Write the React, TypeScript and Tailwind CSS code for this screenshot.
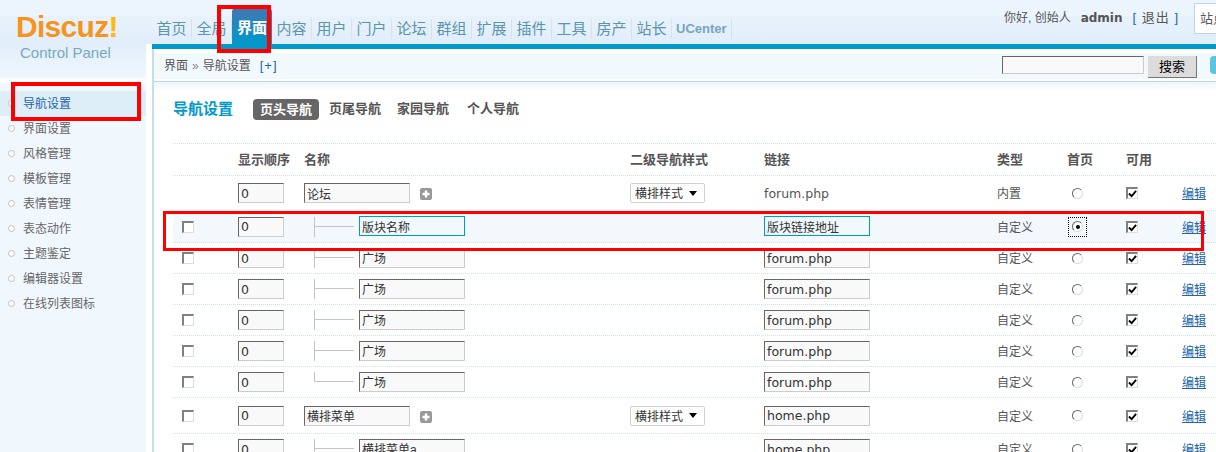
import React from 'react'

const cjk = '[font-family:"Liberation_Sans","Noto_Sans_CJK_SC",sans-serif]'
const grid = 'grid grid-cols-[65px_66px_326px_134px_233px_70px_59px_55px_1fr] items-center'

const navItems = ['首页', '全局', '界面', '内容', '用户', '门户', '论坛', '群组', '扩展', '插件', '工具', '房产', '站长']
const sideItems = ['导航设置', '界面设置', '风格管理', '模板管理', '表情管理', '表态动作', '主题鉴定', '编辑器设置', '在线列表图标']
const tabs = ['页头导航', '页尾导航', '家园导航', '个人导航']

const TextBox: React.FC<{ value: string; width: string; focus?: boolean; latin?: boolean }> = ({ value, width, focus, latin }) => (
  <input
    readOnly
    value={value}
    className={`${width} h-[20px] px-[2px] text-[#333] outline-none ${
      latin ? "text-[12.5px] [font-family:'DejaVu_Sans',sans-serif]" : `text-[12px] ${cjk}`
    } ${
      focus
        ? 'border border-[#0099cc] bg-[#f2f9fd]'
        : 'border border-t-[#666] border-l-[#666] border-b-[#ccc] border-r-[#ccc] bg-[#f9f9f9]'
    }`}
  />
)

const CheckBox: React.FC<{ checked?: boolean }> = ({ checked }) => (
  <div className="w-[12px] h-[12px] border border-t-2 border-l-2 border-t-[#808080] border-l-[#808080] border-b-[#ddd] border-r-[#ddd] bg-white flex items-center justify-center">
    {checked && (
      <svg viewBox="0 0 10 10" className="w-[9px] h-[9px] shrink-0">
        <path d="M1 5 L4 8 L9 2" fill="none" stroke="#000" strokeWidth="2" />
      </svg>
    )}
  </div>
)

const Radio: React.FC<{ checked?: boolean }> = ({ checked }) => (
  <div className={`w-[19px] h-[20px] flex items-center justify-center ${checked ? 'outline-1 outline-dotted outline-black -outline-offset-1' : ''}`}>
    <div className="w-[11px] h-[11px] rounded-full border border-t-[#666] border-l-[#666] border-b-[#ddd] border-r-[#ddd] bg-white flex items-center justify-center">
      {checked && <div className="w-[4px] h-[4px] rounded-full bg-black" />}
    </div>
  </div>
)

const Tree: React.FC<{ last?: boolean }> = ({ last }) =>
  last ? (
    <div className="w-[40px] h-[10px] mb-[10px] ml-[10px] border-l border-b border-[#c4c4c4]" />
  ) : (
    <div className="w-[40px] h-[20px] ml-[10px] border-l border-[#c4c4c4]">
      <div className="h-[10px] border-b border-[#c4c4c4]" />
    </div>
  )

const Plus = () => (
  <div className="w-[12px] h-[12px] ml-[10px] mt-[2px] rounded-[2px] bg-[#999] flex items-center justify-center">
    <svg viewBox="0 0 12 12" className="w-[12px] h-[12px]">
      <path d="M6 2.5 V9.5 M2.5 6 H9.5" stroke="#fff" strokeWidth="2.4" />
    </svg>
  </div>
)

const StyleSelect = () => (
  <div className="w-[75px] h-[20px] pl-[4px] pr-[7px] rounded-[2px] border border-[#ccd0d8] bg-white flex items-center justify-between text-[12px] text-[#333]">
    <span className="pt-[2px]">横排样式</span>
    <svg viewBox="0 0 8 5" className="w-[8px] h-[5px]">
      <path d="M0 0 H8 L4 5 Z" fill="#000" />
    </svg>
  </div>
)

interface RowProps {
  height: string
  check?: boolean
  name: string
  child?: boolean
  last?: boolean
  select?: boolean
  link: string
  linkInput?: boolean
  type: string
  active?: boolean
}

const Row: React.FC<RowProps> = ({ height, check = true, name, child, last, select, link, linkInput, type, active }) => (
  <div className={`${grid} ${height} ${active ? 'bg-[#f2f8fc]' : ''} border-b border-dotted border-[#cfe3ef] text-[12px] text-[#555]`}>
    <div className="pl-[9px]">{check && <CheckBox />}</div>
    <div><TextBox value="0" width="w-[46px]" latin /></div>
    <div className="flex items-center">
      {child ? (
        <>
          <Tree last={last} />
          <div className="ml-[5px]"><TextBox value={name} width="w-[106px]" focus={active} /></div>
        </>
      ) : (
        <>
          <TextBox value={name} width="w-[106px]" />
          <Plus />
        </>
      )}
    </div>
    <div>{select && <StyleSelect />}</div>
    <div>
      {linkInput ? (
        <TextBox value={link} width="w-[106px]" focus={active} latin={!active} />
      ) : (
        <span className="relative top-[1px] text-[12.5px] text-[#555] [font-family:'DejaVu_Sans',sans-serif]">{link}</span>
      )}
    </div>
    <div className="pt-[2px]">{type}</div>
    <div className="pl-[1px]"><Radio checked={active} /></div>
    <div><CheckBox checked /></div>
    <div className="pl-[1px] pt-[2px]"><a className="text-[#2366a8] underline">编辑</a></div>
  </div>
)

const App: React.FC = () => {
  return (
    <div className={`relative w-[1216px] h-[452px] overflow-hidden bg-white ${cjk}`}>
      <header className="flex h-[44px] bg-[linear-gradient(#ecf5fd_0,#ecf5fd_16px,#e8f2fb_16px,#e0eefa_100%)]">
        <div className="w-[152px] h-[44px] pl-[16px] pt-[5px] text-[30px] leading-[44px] font-bold tracking-[-0.7px] text-[#f7941d] [font-family:'Liberation_Sans',sans-serif]">
          Discuz<span className="text-[#fdb813]">!</span>
        </div>
        <nav className="flex h-[44px] items-end">
          {navItems.map((item) =>
            item === '界面' ? (
              <div
                key={item}
                className="w-[40px] h-[36px] pt-[4px] rounded-t-[4px] bg-[linear-gradient(#3f78b4,#0099cc)] text-white text-[15px] font-bold text-center leading-[32px]"
              >
                {item}
              </div>
            ) : (
              <div key={item} className="w-[40px] h-[28px] text-center text-[15px] text-[#5c94ac]">
                <div className="h-[20px] mt-[3px] border-r border-[#d3e3ee] leading-[20px]">{item}</div>
              </div>
            ),
          )}
          <div className="h-[28px] pl-[4px]">
            <div className="h-[20px] mt-[3px] pr-[4px] border-r border-[#d3e3ee] text-[13px] font-bold leading-[20px] text-[#74a6c0]">
              UCenter
            </div>
          </div>
        </nav>
        <div className="ml-auto flex items-start text-[12px] text-[#555]">
          <div className="pt-[9px] flex gap-[10px] mr-[15px] leading-[18px]">
            <span>你好, 创始人</span>
            <span className="font-bold [font-family:'DejaVu_Sans',sans-serif]">admin</span>
            <span className="text-[13px] tracking-[1px]"><span className="text-[#2366a8]">[</span> 退出 <span className="text-[#2366a8]">]</span></span>
          </div>
          <div className="mt-[3px] w-[40px] mr-[-18px] h-[31px] border border-[#bcd8e2] bg-white pl-[5px] text-[13px] leading-[29px] overflow-hidden whitespace-nowrap">
            站点功能
          </div>
        </div>
      </header>

      <div className="flex h-[408px]">
        <aside className="w-[146px] flex flex-col">
          <div className="h-[34px] shrink-0 pl-[20px] text-[15px] leading-[17px] text-[#7aa8bc] bg-[linear-gradient(#e0eefa,#f0f7fd)] [font-family:'Liberation_Sans',sans-serif]">
            Control Panel
          </div>
          <div className="h-[5px] shrink-0 bg-white" />
          <div className="flex-1 bg-[#f1f8fd] pt-[8px]">
            {sideItems.map((item, i) => (
              <div key={item} className={`h-[25px] flex items-center ${i === 0 ? 'bg-[#deeef8] text-[#2366a8]' : 'text-[#666]'} text-[12px]`}>
                <div className="ml-[8px] w-[7px] h-[7px] rounded-full border border-[#c0c0c0] bg-white" />
                <span className="ml-[8px]">{item}</span>
              </div>
            ))}
          </div>
        </aside>

        <main className="ml-[6px] flex-1 flex flex-col min-w-0 overflow-hidden">
          <div className="h-[5px] shrink-0 bg-[#0099cc]" />
          <div className="flex-1 flex flex-col border-l-2 border-[#c4deec] min-w-0">
            <div className="h-[4px] shrink-0" />
            <div className="h-[26px] shrink-0 bg-[#f2f9fd] flex items-center pl-[10px] text-[12px] text-[#555]">
              <span>界面</span>
              <span className="mx-[4px] text-[#888]">»</span>
              <span>导航设置</span>
              <span className="ml-[9px] text-[13px] tracking-[1px] text-[#2366a8]">[+]</span>
              <div className="ml-auto flex items-start mt-[2px]">
                <div className="w-[142px] h-[18px] border border-t-[#666] border-l-[#666] border-b-[#ccc] border-r-[#ccc] bg-[#f9f9f9]" />
                <button className="ml-[4px] w-[49px] h-[22px] bg-[#dcdcdc] border-r border-b border-[#777] text-[13px] text-black">搜索</button>
                <div className="ml-[13px] w-[6px] h-[18px] rounded-l-[4px] bg-[#5cc6dc]" />
              </div>
            </div>
            <div className="h-[2px] shrink-0" />
            <div className="h-[1px] shrink-0 bg-[#b9d7e3]" />
            <div className="h-[10px] shrink-0 bg-[linear-gradient(#eef6fb,#fff)]" />
            <div className="pl-[19px] pt-[5px]">
              <div className="flex items-center h-[24px]">
                <h1 className="text-[15px] font-bold text-[#0099cc] w-[80px]">导航设置</h1>
                <div className="flex items-center text-[13px] font-bold text-[#555]">
                  <span className="w-[66px] h-[21px] rounded-[4px] bg-[#666] text-white text-center leading-[21px]">{tabs[0]}</span>
                  <span className="ml-[10px]">{tabs[1]}</span>
                  <span className="ml-[16px]">{tabs[2]}</span>
                  <span className="ml-[18px]">{tabs[3]}</span>
                </div>
              </div>
              <div className="mt-[22px] border-t border-dotted border-[#cfe3ef]">
                <div className={`${grid} h-[32px] border-b border-dotted border-[#cfe3ef] text-[13px] font-bold text-[#555]`}>
                  <div />
                  <div>显示顺序</div>
                  <div>名称</div>
                  <div>二级导航样式</div>
                  <div>链接</div>
                  <div>类型</div>
                  <div>首页</div>
                  <div>可用</div>
                  <div />
                </div>
                <Row height="h-[35px]" check={false} name="论坛" select link="forum.php" type="内置" />
                <Row height="h-[32px]" name="版块名称" child link="版块链接地址" linkInput type="自定义" active />
                <Row height="h-[31px]" name="广场" child link="forum.php" linkInput type="自定义" />
                <Row height="h-[31px]" name="广场" child link="forum.php" linkInput type="自定义" />
                <Row height="h-[31px]" name="广场" child link="forum.php" linkInput type="自定义" />
                <Row height="h-[31px]" name="广场" child link="forum.php" linkInput type="自定义" />
                <Row height="h-[31px]" name="广场" child last link="forum.php" linkInput type="自定义" />
                <Row height="h-[36px]" name="横排菜单" select link="home.php" linkInput type="自定义" />
                <Row height="h-[31px]" name="横排菜单a" child link="home.php" linkInput type="自定义" />
              </div>
            </div>
          </div>
        </main>
      </div>

      {/* red annotation boxes drawn over the screenshot */}
      <div className="absolute left-[217px] top-[5px] w-[54px] h-[48px] border-4 border-[#f00]" />
      <div className="absolute left-[11px] top-[82px] w-[130px] h-[39px] border-4 border-[#f00]" />
      <div className="absolute left-[163px] top-[211px] w-[1041px] h-[40px] border-[3px] border-[#f00]" />
    </div>
  )
}

export default App
